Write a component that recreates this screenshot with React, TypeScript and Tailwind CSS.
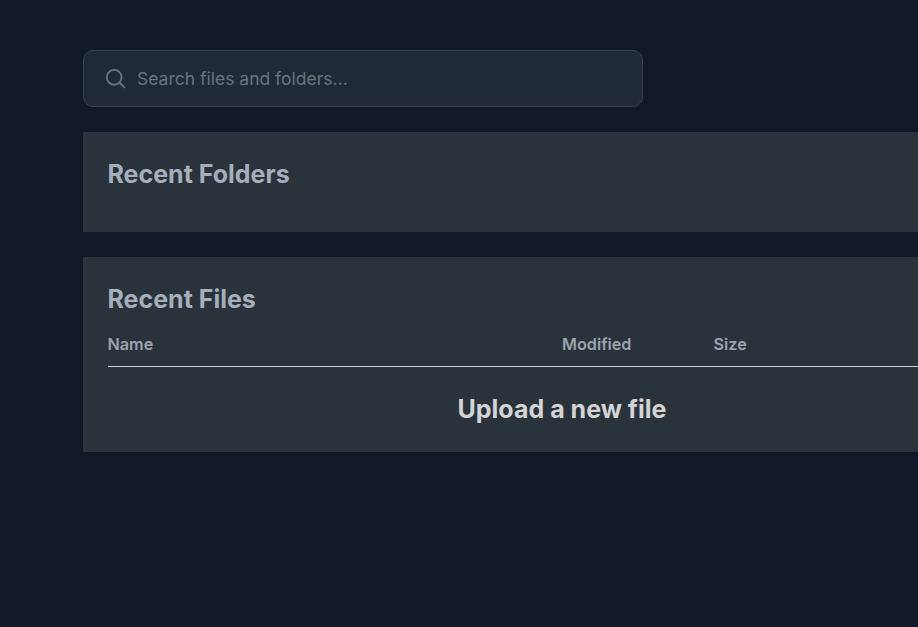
const font = "font-['Inter',sans-serif]";

export default function App() {
  return (
    <div className={`${font} flex h-[627px] w-[918px] overflow-hidden bg-[#111827]`}>
      <aside className="mt-[14px] w-[31px] shrink-0 border-r border-[#101624]" />
      <main className="w-[887px] pl-[52px] pt-[50px]">
        <label className="flex h-[57px] w-[560px] items-center rounded-[10px] border border-[#374151] bg-[#1f2937] pl-[21px]">
          <svg className="h-[22px] w-[22px] shrink-0 text-[#6b7280]" viewBox="0 0 22 22" fill="none" stroke="currentColor" strokeWidth="1.9">
            <circle cx="9.2" cy="9.3" r="7.4" />
            <path d="M14.4 14.5l5.4 5.4" />
          </svg>
          <input className="ml-[10px] w-[480px] bg-transparent pt-[2px] text-[17.5px] text-gray-300 outline-none placeholder:text-[#6b7280]" placeholder="Search files and folders..." />
        </label>
        <section className="mt-[25px] h-[100px] bg-[#2a323c] px-[24.5px] pt-[25px]">
          <h2 className="text-[25px] leading-[35px] font-bold text-[#a6adbb]">Recent Folders</h2>
        </section>
        <section className="mt-[25px] h-[195px] bg-[#2a323c] pl-[25px] pt-[25px]">
          <h2 className="-ml-[0.5px] text-[25px] leading-[35px] font-bold text-[#a6adbb]">Recent Files</h2>
          <div className="mt-[12px] flex h-[38px] border-b border-[#d1d5db] text-[16.2px] leading-[30px] font-semibold text-[#9ca3af]">
            <span className="-ml-[0.5px] w-[454.5px]">Name</span>
            <span className="w-[151.5px]">Modified</span>
            <span>Size</span>
          </div>
          <p className="mt-[25px] w-[908px] text-center text-[25px] leading-[35px] font-bold text-[#d4d4d4]">Upload a new file</p>
        </section>
      </main>
    </div>
  );
}
